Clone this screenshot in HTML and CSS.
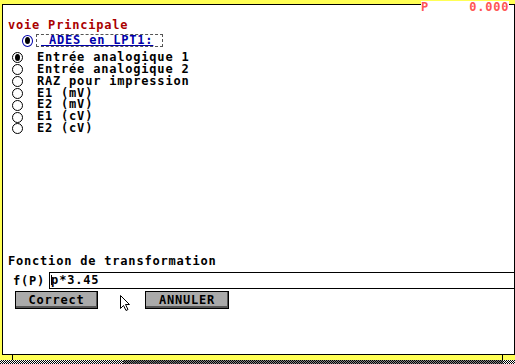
FILE: index.html
```html
<!DOCTYPE html>
<html lang="fr">
<head>
<meta charset="utf-8">
<title>voie Principale</title>
<link rel="stylesheet" href="styles.css">
</head>
<body>
<div class="desk">
  <div class="topbar"></div>
  <div class="dialog">
    <div class="status">P     0.000</div>
    <div class="title">voie Principale</div>
    <div class="src">
      <span class="radio radio-src"><span class="dot"></span></span>
      <span class="src-box"><span class="src-text"> ADES en LPT1:</span> </span>
    </div>
    <ul class="list">
      <li class="item"><span class="radio"><span class="dot"></span></span><span class="label">Entrée analogique 1</span></li>
      <li class="item"><span class="radio"></span><span class="label">Entrée analogique 2</span></li>
      <li class="item"><span class="radio"></span><span class="label">RAZ pour impression</span></li>
      <li class="item"><span class="radio"></span><span class="label">E1 (mV)</span></li>
      <li class="item"><span class="radio"></span><span class="label">E2 (mV)</span></li>
      <li class="item"><span class="radio"></span><span class="label">E1 (cV)</span></li>
      <li class="item"><span class="radio"></span><span class="label">E2 (cV)</span></li>
    </ul>
    <div class="fn-title">Fonction de transformation</div>
    <div class="fn-row">
      <span class="fn-label">f(P)</span>
      <div class="input"><span class="caret"></span>p*3.45</div>
    </div>
    <div class="buttons">
      <button class="btn btn-ok">Correct</button>
      <button class="btn btn-cancel">ANNULER</button>
    </div>
    <svg class="pointer" width="12" height="18" viewBox="0 0 12 18">
      <path d="M0.5 0.5 L0.5 13.5 L3.5 10.5 L6 15.5 L8 14.5 L5.5 9.5 L9.5 9.5 Z" fill="#fff" stroke="#000" stroke-width="1" stroke-linejoin="miter"/>
    </svg>
  </div>
  <div class="behind"></div>
  <div class="dither">
    <div class="dither-side"></div>
    <div class="dither-mid"></div>
    <div class="dither-side dither-end"></div>
  </div>
</div>
</body>
</html>
```
FILE: styles.css
```css
* { box-sizing: border-box; }
html, body { margin: 0; padding: 0; }
body {
  width: 515px;
  height: 364px;
  overflow: hidden;
  background: #ffff55;
  font-family: "DejaVu Sans Mono", "Liberation Mono", monospace;
  font-weight: bold;
  font-size: 12px;
  letter-spacing: 0.8px;
  color: #000;
}
.desk {
  display: flex;
  flex-direction: column;
  height: 364px;
}
.topbar { height: 4px; flex: none; }
.dialog {
  position: relative;
  flex: none;
  height: 351px;
  margin-left: 2px;
  width: 513px;
  background: #fff;
  border: 1px solid #000;
  display: flex;
  flex-direction: column;
  padding: 14px 0 45px 5px;
}
.status {
  position: absolute;
  left: 418px;
  top: -4px;
  width: 88px;
  height: 12px;
  line-height: 12px;
  background: #fff;
  color: #ff5555;
  white-space: pre;
}
.title {
  line-height: 12px;
  color: #aa0000;
}
.src {
  display: flex;
  align-items: center;
  margin-top: 3px;
  margin-left: 14px;
  height: 13px;
}
.radio {
  position: relative;
  flex: none;
  display: inline-block;
  width: 11px;
  height: 11px;
  border: 1px solid #000;
  border-radius: 50%;
  background: #fff;
}
.radio .dot {
  position: absolute;
  left: 2px;
  top: 1px;
  width: 5px;
  height: 7px;
  border-radius: 50%;
  background: #000;
}
.radio-src {
  height: 12px;
  border-color: #0000aa;
  border-width: 1.5px;
}
.radio-src .dot { left: 1.5px; top: 1px; width: 5px; height: 7px; }
.src-box {
  margin-left: 3px;
  height: 13px;
  line-height: 11px;
  padding: 0 1px 0 4px;
  border: 1px dashed #555;
  color: #0000aa;
  white-space: pre;
}
.src-text {
  text-decoration: underline;
  text-underline-offset: 1px;
}
.list {
  list-style: none;
  margin: 5px 0 0 4px;
  padding: 0;
}
.item {
  display: flex;
  align-items: center;
  height: 11.85px;
  line-height: 11.85px;
}
.item .label { margin-left: 14px; white-space: pre; }
.fn-title {
  margin-top: auto;
  line-height: 12px;
}
.fn-row {
  display: flex;
  align-items: center;
  margin-top: 5px;
  height: 17px;
}
.fn-label { margin-left: 5px; line-height: 12px; }
.input {
  flex: 1;
  margin-left: 4px;
  height: 17px;
  line-height: 15px;
  border-top: 1px solid #000;
  border-bottom: 1px solid #000;
  border-left: 1px solid #000;
  padding-left: 1px;
  white-space: pre;
}
.caret {
  display: inline-block;
  width: 1px;
  height: 10px;
  background: #000;
  vertical-align: -1px;
  margin-right: -1px;
}
.buttons {
  display: flex;
  margin-top: 2px;
  margin-left: 7px;
  gap: 47px;
}
.btn {
  font: inherit;
  letter-spacing: inherit;
  color: #000;
  height: 18px;
  line-height: 14px;
  padding: 0;
  margin: 0;
  background: #aaaaaa;
  border: 1px solid #000;
  border-radius: 0;
  box-shadow: inset -1px -2px 0 #555;
  text-align: center;
}
.btn-ok { width: 83px; }
.btn-cancel { width: 84px; }
.pointer {
  position: absolute;
  left: 117px;
  top: 290px;
}
.behind {
  flex: none;
  height: 5px;
  margin: 0 12px 0 12px;
  border-left: 1px solid #000;
  border-right: 1px solid #000;
}
.dither {
  flex: none;
  height: 4px;
  display: flex;
}
.dither-side {
  width: 123px;
  background: repeating-conic-gradient(#000 0 25%, #fff 0 50%) 0 0 / 2px 2px;
}
.dither-mid {
  flex: 1;
  background: repeating-conic-gradient(#000 0 25%, #888 0 50%) 0 0 / 2px 2px;
}
.dither-end { width: 12px; }
```
